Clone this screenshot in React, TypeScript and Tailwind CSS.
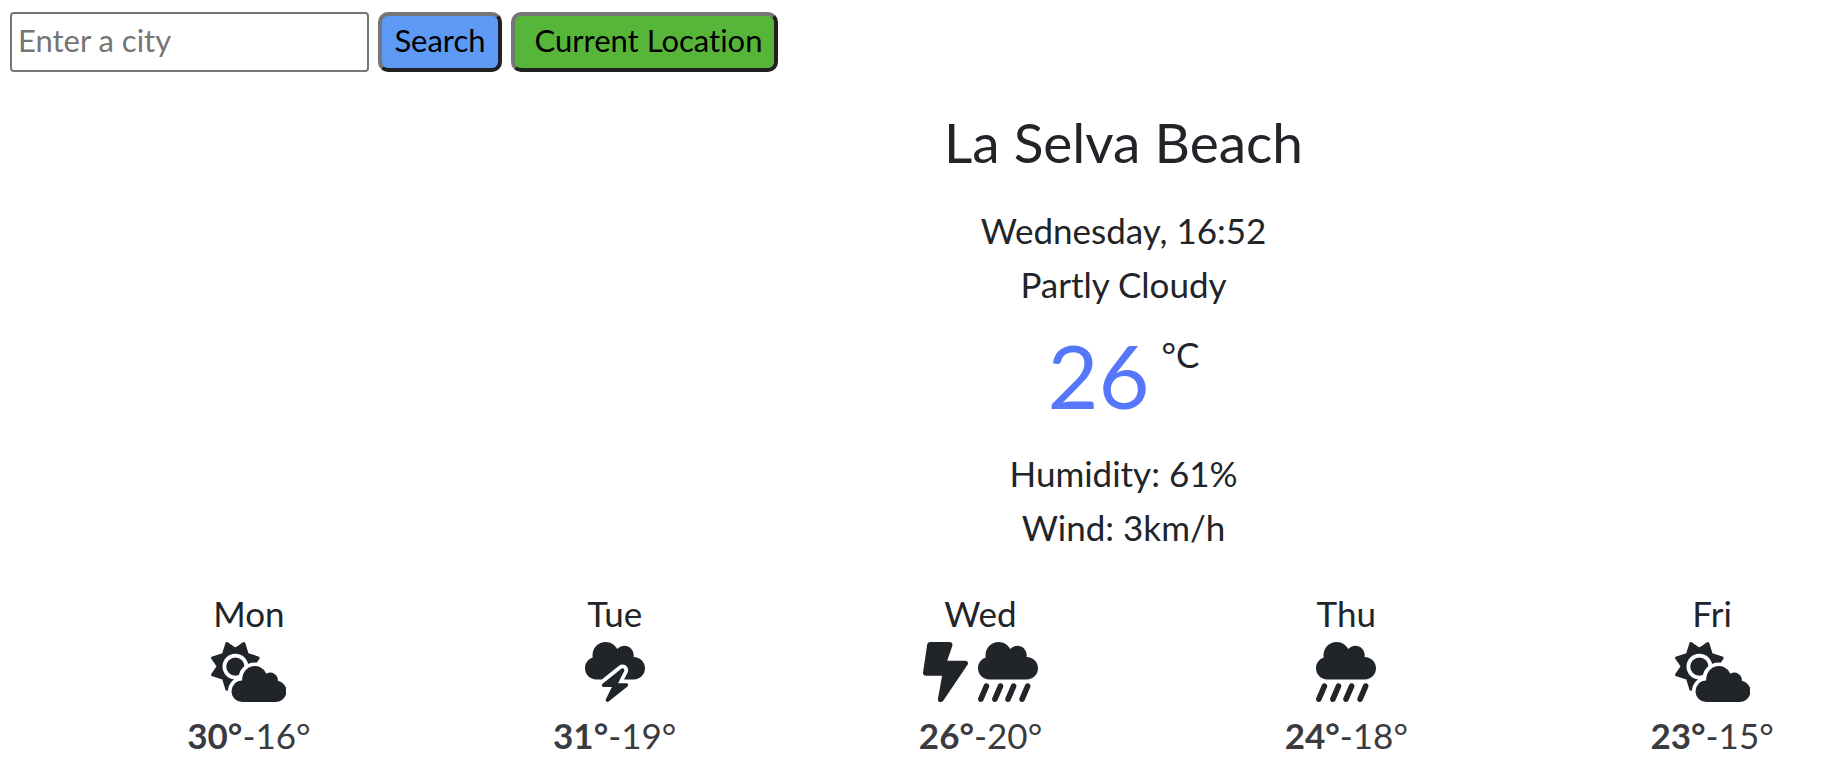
import { FaCloudBolt, FaCloudShowersHeavy } from "react-icons/fa6";
import type { ReactNode } from "react";

function Bolt() {
  return (
    <svg viewBox="0 0 384 512" className="h-[60px] w-[45px]" fill="currentColor" aria-hidden="true">
      <path d="M359 160H206l44-125C256 17 246 0 226 0H62C48 0 38 9 36 22L0 260c-2 16 9 28 25 28h138L128 483c-4 17 7 29 22 29 10 0 18-5 24-13l206-304c11-16 0-35-21-35z" />
    </svg>
  );
}

const cloudShape =
  "M268 512a92 92 0 0 1-2-184v-16a108 108 0 0 1 207-42a66 66 0 0 1 98 60a92 92 0 0 1-23 182z";

function CloudSun() {
  return (
    <svg viewBox="0 0 640 512" className="h-[60px] w-[75px]" fill="currentColor" aria-hidden="true">
      <path
        d="M137 16L208 66L279 16L308 108L400 137L350 208L400 279L308 308L279 400L208 350L137 400L108 308L16 279L66 208L16 137L108 108Z"
        stroke="currentColor"
        strokeWidth="30"
        strokeLinejoin="round"
      />
      <circle cx="208" cy="210" r="110" fill="white" />
      <circle cx="208" cy="210" r="78" />
      <path d={cloudShape} stroke="white" strokeWidth="62" fill="white" />
      <path d={cloudShape} />
    </svg>
  );
}

type Day = { name: string; high: number; low: number; icons: ReactNode };

const days: Day[] = [
  { name: "Mon", high: 30, low: 16, icons: <CloudSun /> },
  { name: "Tue", high: 31, low: 19, icons: <FaCloudBolt className="size-[60px]" /> },
  {
    name: "Wed",
    high: 26,
    low: 20,
    icons: (
      <>
        <Bolt />
        <FaCloudShowersHeavy className="size-[60px]" />
      </>
    ),
  },
  { name: "Thu", high: 24, low: 18, icons: <FaCloudShowersHeavy className="size-[60px]" /> },
  { name: "Fri", high: 23, low: 15, icons: <CloudSun /> },
];

const buttonBase =
  "h-[60px] rounded-[10px] border-4 border-t-[#767676] border-l-[#767676] border-r-[#212121] border-b-[#212121] pb-1 text-black";

export default function App() {
  return (
    <div className="min-h-screen overflow-x-hidden bg-white font-['Lato','Open_Sans',sans-serif] text-[35px] leading-[54px] text-[#212529] [font-variant-ligatures:none]">
      <form
        className="flex items-center gap-[9px] px-[10px] pt-3 text-[31px] leading-[48px]"
        onSubmit={(event) => event.preventDefault()}
      >
        <input
          type="text"
          aria-label="City"
          placeholder="Enter a city"
          className="h-[60px] w-[359px] rounded-[4px] border-2 border-[#767676] px-[6px] pb-1 placeholder:text-[#757575]"
        />
        <button type="submit" className={`${buttonBase} w-[124px] bg-[#5c9af5]`}>
          Search
        </button>
        <button type="button" className={`${buttonBase} w-[267px] bg-[#57b63a] pl-2`}>
          Current Location
        </button>
      </form>

      <main className="pl-[410px] text-center">
        <h1 className="pt-9 text-[55px] leading-[68px]">La Selva Beach</h1>
        <ul className="pt-[27px]">
          <li>Wednesday, 16:52</li>
          <li>Partly Cloudy</li>
        </ul>
        <div className="flex h-[135px] items-start justify-center gap-3 pt-4">
          <span className="text-[88px] leading-[96px] text-[#5777fb]">26</span>
          <span>°C</span>
        </div>
        <ul>
          <li>Humidity: 61%</li>
          <li>Wind: 3km/h</li>
        </ul>
      </main>

      <section className="-mr-[58px] ml-[66px] grid grid-cols-5 pt-8 text-center" aria-label="Forecast">
        {days.map((day) => (
          <div key={day.name}>
            <h2>{day.name}</h2>
            <div className="flex justify-center gap-[10px] pt-[2px] pb-[6px]">{day.icons}</div>
            <p className="text-[#3a3b3f]">
              <strong>{day.high}°</strong>-{day.low}°
            </p>
          </div>
        ))}
      </section>
    </div>
  );
}
